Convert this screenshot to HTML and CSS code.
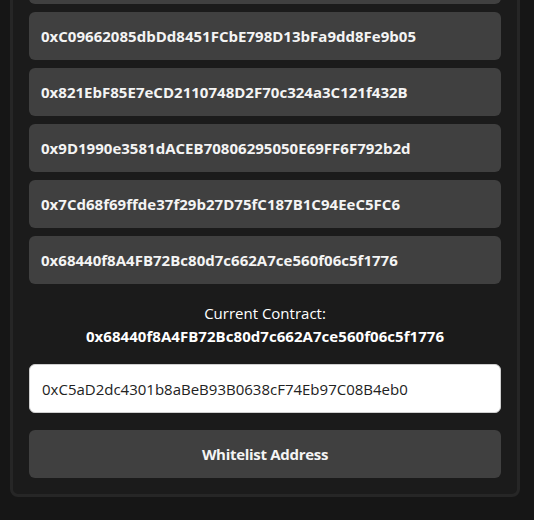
FILE: index.html
```html
<!DOCTYPE html>
<html>
<head>
<meta charset="utf-8">
<link rel="stylesheet" href="styles.css">
</head>
<body>
<div class="card">
  <div class="list">
    <div class="item"></div>
    <div class="item">0xC09662085dbDd8451FCbE798D13bFa9dd8Fe9b05</div>
    <div class="item">0x821EbF85E7eCD2110748D2F70c324a3C121f432B</div>
    <div class="item">0x9D1990e3581dACEB70806295050E69FF6F792b2d</div>
    <div class="item">0x7Cd68f69ffde37f29b27D75fC187B1C94EeC5FC6</div>
    <div class="item">0x68440f8A4FB72Bc80d7c662A7ce560f06c5f1776</div>
  </div>
  <div class="current">
    <div class="label">Current Contract:</div>
    <div class="addr">0x68440f8A4FB72Bc80d7c662A7ce560f06c5f1776</div>
  </div>
  <input class="field" type="text" value="0xC5aD2dc4301b8aBeB93B0638cF74Eb97C08B4eb0">
  <button class="btn">Whitelist Address</button>
</div>
</body>
</html>
```
FILE: styles.css
```css
html, body {
  margin: 0;
  padding: 0;
  background: #161616;
  font-family: "Open Sans", "Noto Sans", sans-serif;
  color: #ffffff;
  height: 520px;
  overflow: hidden;
}
.card {
  margin: -63px 14px 0 10px;
  background: #1b1b1b;
  border: 3px solid #262626;
  border-radius: 8px;
  padding: 16px;
  display: flex;
  flex-direction: column;
}
.list {
  display: flex;
  flex-direction: column;
  gap: 8px;
}
.item {
  height: 48px;
  box-sizing: border-box;
  background: #404040;
  border-radius: 6px;
  padding: 0 12px;
  display: flex;
  align-items: center;
  font-size: 15px;
  font-weight: 700;
  letter-spacing: 0.02px;
  color: #f4f4f4;
}
.current {
  margin: 18px 0 17px;
  text-align: center;
  line-height: 22px;
  font-size: 15px;
}
.label {
  font-weight: 400;
  letter-spacing: 0;
}
.addr {
  font-weight: 700;
  letter-spacing: 0.05px;
  margin-top: 1px;
}
.field {
  height: 49px;
  box-sizing: border-box;
  border: 1px solid #cfcfcf;
  border-radius: 6px;
  background: #ffffff;
  padding: 0 12px;
  font-family: "Open Sans", "Noto Sans", sans-serif;
  font-size: 15px;
  letter-spacing: 0;
  color: #222222;
  outline: none;
}
.btn {
  margin-top: 17px;
  height: 48px;
  border: none;
  border-radius: 6px;
  background: #404040;
  color: #f4f4f4;
  font-family: "Open Sans", "Noto Sans", sans-serif;
  font-size: 15px;
  font-weight: 700;
  letter-spacing: -0.3px;
}
```
